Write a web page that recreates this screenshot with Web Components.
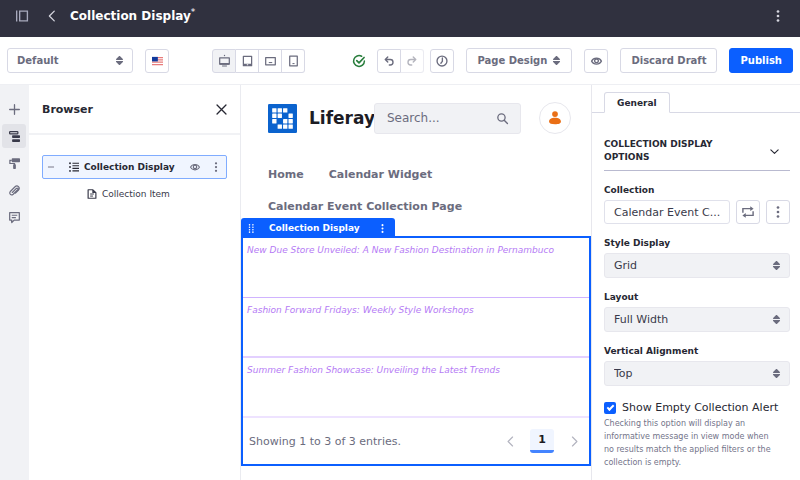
<!DOCTYPE html>
<html lang="en">
<head>
<meta charset="utf-8">
<title>Collection Display</title>
<style>
  html, body { height: 100%; }
  body {
    margin: 0;
    font-family: "DejaVu Sans", sans-serif;
    font-size: 11px;
    color: #272833;
    background: #fff;
    --dark: #30313f;
    --gray: #6b6c7e;
    --soft: #f1f2f5;
    --blue: #0b5fff;
  }
</style>
</head>
<body>
<page-editor></page-editor>

<script>
const RESET = `
  *, *::before, *::after { box-sizing: border-box; }
  button, input, select { font: inherit; color: inherit; margin: 0; }
  button { padding: 0; border: 0; background: none; cursor: pointer; display: inline-flex; align-items: center; justify-content: center; }
  h1, h2, h3, p, ul { margin: 0; padding: 0; }
  ul { list-style: none; }
  a { color: inherit; text-decoration: none; }
`;

class BaseElement extends HTMLElement {
  constructor() {
    super();
    this.attachShadow({ mode: 'open' });
  }
  connectedCallback() {
    if (!this.shadowRoot.firstChild) this.shadowRoot.innerHTML = `<style>${RESET}${this.styles()}</style>${this.markup()}`;
  }
  styles() { return ''; }
  markup() { return ''; }
}

const ICONS = {
  panel: '<path fill="none" stroke="currentColor" stroke-width="1.8" d="M4.900 1.500h10.300v13H4.900z"/><path fill="currentColor" d="M0 .6h1.800v14.800H0z"/>',
  left: '<path fill="none" stroke="currentColor" stroke-width="1.7" stroke-linecap="round" stroke-linejoin="round" d="M11 1.500 4.500 8l6.500 6.500"/>',
  right: '<path fill="none" stroke="currentColor" stroke-width="1.7" stroke-linecap="round" stroke-linejoin="round" d="M5 1.500 11.500 8 5 14.500"/>',
  down: '<path fill="none" stroke="currentColor" stroke-width="2" stroke-linecap="round" stroke-linejoin="round" d="m1.500 5 6.500 6.500L14.500 5"/>',
  dots: '<g fill="currentColor"><circle cx="8" cy="2" r="1.8"/><circle cx="8" cy="8" r="1.8"/><circle cx="8" cy="14" r="1.8"/></g>',
  drag: '<g fill="currentColor"><circle cx="4.500" cy="1.500" r="1.400"/><circle cx="4.500" cy="5.800" r="1.400"/><circle cx="4.500" cy="10.200" r="1.400"/><circle cx="4.500" cy="14.500" r="1.400"/><circle cx="10.500" cy="1.500" r="1.400"/><circle cx="10.500" cy="5.800" r="1.400"/><circle cx="10.500" cy="10.200" r="1.400"/><circle cx="10.500" cy="14.500" r="1.400"/></g>',
  flag: '<path fill="#fff" d="M0 2h16v12H0z"/><path fill="#e87c7c" d="M0 2h16v2H0zm0 3.400h16v1.800H0zm0 3.400h16v1.800H0zm0 3.400h16V14H0z"/><path fill="#123a9c" d="M0 2h8.500v6.600H0z"/>',
  desktop: '<path fill="none" stroke="currentColor" stroke-width="1.800" stroke-linejoin="round" d="M1 3.500h14v9H1z"/><path fill="currentColor" d="M1 11h14v2.400H1zm3.500 3.400h7V16h-7z"/><circle cx="8" cy="0" r="1" fill="currentColor"/>',
  tablet: '<path fill="none" stroke="currentColor" stroke-width="1.800" stroke-linejoin="round" d="M2 1.200h12v13.600H2z"/><path fill="currentColor" d="M2 12h12v3H2z"/><path fill="#fff" d="M7 12.800h2v1.400H7z"/>',
  landscape: '<path fill="none" stroke="currentColor" stroke-width="1.800" stroke-linejoin="round" d="M1 3h14v10.500H1z"/><path fill="currentColor" d="M5.500 9.500h5v1.500h-5z"/>',
  portrait: '<path fill="none" stroke="currentColor" stroke-width="1.800" stroke-linejoin="round" d="M2.500 1h11v14h-11z"/><path fill="currentColor" d="M6.500 11h3v1.500h-3z"/>',
  check: '<path fill="none" stroke="currentColor" stroke-width="2" stroke-linecap="round" d="M11.500 1.700A7.200 7.200 0 1 0 15.200 8"/><path fill="none" stroke="currentColor" stroke-width="2.200" stroke-linecap="round" stroke-linejoin="round" d="m5 7.500 3 3 6.800-7.200"/>',
  undo: '<path fill="none" stroke="currentColor" stroke-width="2.200" stroke-linecap="round" stroke-linejoin="round" d="M3 5.500h7a4.400 4.400 0 0 1 0 8.800H8.500M6 1.500 2 5.500l4 4"/>',
  redo: '<path fill="none" stroke="currentColor" stroke-width="2.200" stroke-linecap="round" stroke-linejoin="round" d="M13 5.500H6a4.400 4.400 0 0 0 0 8.800h1.500M10 1.500l4 4-4 4"/>',
  clock: '<circle cx="8" cy="8" r="6.600" fill="none" stroke="currentColor" stroke-width="1.800"/><path fill="none" stroke="currentColor" stroke-width="1.800" stroke-linecap="round" d="M8.500 4v4.500L6.500 11"/>',
  eye: '<path fill="none" stroke="currentColor" stroke-width="1.700" d="M.8 8.200c3-5.800 11.400-5.800 14.400 0-3 5.800-11.400 5.800-14.400 0z"/><circle cx="8" cy="7.800" r="2.700" fill="none" stroke="currentColor" stroke-width="1.900"/>',
  plus: '<path fill="none" stroke="currentColor" stroke-width="1.900" stroke-linecap="round" d="M8 1v14M1 8h14"/>',
  minus: '<path fill="none" stroke="currentColor" stroke-width="2.400" stroke-linecap="round" d="M1 8h14"/>',
  tree: '<rect x=".9" y=".9" width="12" height="3.400" rx="1" fill="none" stroke="currentColor" stroke-width="1.800"/><rect x="4.500" y="6" width="11.500" height="4" rx="1" fill="currentColor"/><rect x="4.500" y="12" width="11.500" height="4" rx="1" fill="currentColor"/>',
  roller: '<rect x="4" y=".5" width="12" height="5.500" rx="1" fill="currentColor"/><path fill="none" stroke="currentColor" stroke-width="1.800" d="M4 3.300H1.300V8H8v2"/><rect x="6" y="9" width="4" height="7" rx="1" fill="currentColor"/>',
  clip: '<path fill="none" stroke="currentColor" stroke-width="1.700" stroke-linecap="round" stroke-linejoin="round" d="m4.800 10.900 5.900-5.900c1.600-1.400 3.300.3 1.900 1.900l-6.500 6.500c-3 2.600-6.700-.8-4.200-4l6.500-6.500c4-3.800 8.600.9 5.200 4.800l-4.200 4.200"/>',
  comment: '<path fill="none" stroke="currentColor" stroke-width="1.800" stroke-linejoin="round" d="M1 1h14v10.800H7.500L4 15.300v-3.500H1z"/><path stroke="currentColor" stroke-width="1.500" d="M4 4.800h8M4 8.200h6"/>',
  close: '<path fill="none" stroke="currentColor" stroke-width="1.900" stroke-linecap="round" d="m1.500 1.500 13 13m0-13-13 13"/>',
  list: '<path fill="currentColor" d="M5.500 1h10.500v1.900H5.500zm0 4h10.500v1.900H5.500zm0 4.200h10.500v1.900H5.500zm0 4.100h10.500v1.900H5.500z"/><g fill="currentColor"><circle cx="1.600" cy="2" r="1.500"/><circle cx="1.600" cy="8" r="1.500"/><circle cx="1.600" cy="14.200" r="1.500"/></g>',
  doc: '<path fill="none" stroke="currentColor" stroke-width="1.900" stroke-linejoin="round" d="M1.800 1.200H9L14.200 6v8.800H1.800z"/><path stroke="currentColor" stroke-width="1.600" d="M5 8h6M5 11.300h4.500"/><path fill="currentColor" d="M8.500 1v5.500H14z"/>',
  search: '<circle cx="6.500" cy="6.500" r="5.300" fill="none" stroke="currentColor" stroke-width="1.900"/><path stroke="currentColor" stroke-width="2" stroke-linecap="round" d="m10.500 10.500 4.700 4.700"/>',
  user: '<circle cx="8" cy="3.500" r="3.300" fill="currentColor"/><path fill="currentColor" d="M1.200 12.200C1.200 9.500 4 7.800 8 7.800s6.800 1.700 6.800 4.400c0 2-2.800 2.800-6.800 2.800s-6.800-.8-6.800-2.800z"/>',
  swap: '<path fill="none" stroke="currentColor" stroke-width="1.900" d="M1.200 9V3.500H12M14.800 7v5.500H4"/><path fill="currentColor" d="M11 .3 15.500 3.500 11 6.700zM5 9.300.5 12.500 5 15.700z"/>',
  sort: '<path fill="currentColor" d="M8 0c.5 0 .8.200 1.100.5L14 5.500c.6.700.3 1.500-.7 1.500H2.700C1.700 7 1.400 6.200 2 5.500L6.900.5C7.200.2 7.500 0 8 0zm0 16c.5 0 .8-.2 1.100-.5l4.900-5c.6-.7.300-1.500-.7-1.500H2.700C1.700 9 1.400 9.800 2 10.500l4.900 5c.3.300.6.500 1.100.5z"/>',
  logo: '<rect width="16" height="16" rx=".7" fill="#0b63ce"/><g fill="#fff">' +
    [[0, 0], [1, 0], [2, 0], [0, 1], [1, 1], [3, 1], [0, 2], [2, 2], [3, 2], [1, 3], [2, 3], [3, 3]]
      .map(([x, y]) => `<rect x="${2.3 + x * 3}" y="${2.3 + y * 3}" width="2.400" height="2.400" rx=".2"/>`).join('') + '</g>'
};

customElements.define('ui-icon', class extends BaseElement {
  styles() { return `:host { display: inline-flex; flex: none; width: 12px; height: 12px; } svg { width: 100%; height: 100%; display: block; overflow: visible; }`; }
  markup() { return `<svg viewBox="0 0 16 16" aria-hidden="true">${ICONS[this.getAttribute('name')]}</svg>`; }
});

customElements.define('ui-button', class extends BaseElement {
  styles() {
    return `
      :host { display: inline-flex; height: 24px; font-weight: bold; color: var(--gray); }
      :host([text]) { height: 25px; font-size: 10px; }
      button { height: 100%; min-width: 24px; border: 1px solid #d8d9e5; border-radius: 3px; background: #fff; white-space: nowrap; gap: 5px; }
      :host([text]) button { padding: 0 10px; }
      :host([primary]) { color: #fff; }
      :host([primary]) button { background: var(--blue); border-color: var(--blue); }
      :host([active]) button { background: var(--soft); }
      :host([join~="start"]) button { min-width: 23px; border-top-left-radius: 0; border-bottom-left-radius: 0; border-left-width: 0; }
      :host([join~="end"]) button { border-top-right-radius: 0; border-bottom-right-radius: 0; }
      button:disabled { opacity: .5; cursor: default; }
    `;
  }
  markup() {
    const label = this.getAttribute('label');
    return `<button type="button" ${label ? `aria-label="${label}"` : ''} ${this.hasAttribute('disabled') ? 'disabled' : ''}><slot></slot></button>`;
  }
});

customElements.define('ui-select', class extends BaseElement {
  styles() {
    return `
      :host { display: grid; font-size: 11px; color: #393a4a; }
      label { font-size: 9px; line-height: 12px; font-weight: bold; color: #272833; margin-bottom: 4px; }
      .box { display: grid; grid-template-columns: 1fr auto; align-items: center; height: 25px; border: 1px solid #e7e7ed; border-radius: 3px; background: var(--soft); }
      select { grid-area: 1 / 1 / 2 / 3; appearance: none; width: 100%; height: 100%; border: 0; background: none; padding: 0 24px 0 9px; }
      ui-icon { grid-area: 1 / 2; width: 9px; height: 9px; margin-right: 8px; color: var(--gray); pointer-events: none; }
      :host([plain]) { font-size: 10px; font-weight: bold; color: var(--gray); }
      :host([plain]) .box { background: #fff; border-color: #d8d9e5; }
    `;
  }
  markup() {
    const label = this.getAttribute('label');
    const plain = this.hasAttribute('plain');
    return `${plain ? '' : `<label for="s">${label}</label>`}
      <div class="box"><select id="s" ${plain ? `aria-label="${label}"` : ''}><option>${this.getAttribute('value')}</option></select><ui-icon name="sort"></ui-icon></div>`;
  }
});

customElements.define('control-menu', class extends BaseElement {
  styles() {
    return `
      :host { display: flex; box-sizing: border-box; align-items: center; height: 37px; padding: 0 16px 5px; background: var(--dark); color: #d5d6df; }
      h1 { flex: 1; color: #fff; font-size: 12px; line-height: 16px; margin-left: 12px; }
      sup { font-size: 9px; line-height: 8px; font-weight: normal; vertical-align: top; }
      .back { margin-left: 18px; }
      .panel { color: #a7a9bc; }
    `;
  }
  markup() {
    return `<button class="panel" aria-label="Product menu"><ui-icon name="panel"></ui-icon></button>
      <button class="back" aria-label="Back"><ui-icon name="left"></ui-icon></button>
      <h1>Collection Display<sup>*</sup></h1>
      <button class="dots" aria-label="Options"><ui-icon name="dots"></ui-icon></button>`;
  }
});

customElements.define('editor-toolbar', class extends BaseElement {
  styles() {
    return `
      :host { display: flex; box-sizing: border-box; align-items: center; height: 48px; padding: 0 7px; border-bottom: 1px solid #eeeff3; gap: 12px; }
      .exp { width: 126px; }
      .sizes { display: flex; margin: 0 auto 0 31px; }
      .history { display: flex; }
      .ok { color: #287d3c; }
      .history, ui-button { flex: none; }
      .clock { margin-left: -6px; }
      .small { width: 9px; height: 9px; }
      .mid { width: 11px; }
      .arrow { width: 10px; }
    `;
  }
  markup() {
    return `<ui-select class="exp" plain label="Experience" value="Default"></ui-select>
      <ui-button label="Language: English"><ui-icon name="flag" class="mid"></ui-icon></ui-button>
      <div class="sizes">
        <ui-button active join="end" label="Desktop"><ui-icon name="desktop" class="mid"></ui-icon></ui-button>
        <ui-button join="start end" label="Tablet"><ui-icon name="tablet" class="mid"></ui-icon></ui-button>
        <ui-button join="start end" label="Landscape phone"><ui-icon name="landscape" class="mid"></ui-icon></ui-button>
        <ui-button join="start" label="Portrait phone"><ui-icon name="portrait" class="mid"></ui-icon></ui-button>
      </div>
      <ui-icon class="ok" name="check"></ui-icon>
      <div class="history">
        <ui-button join="end" label="Undo"><ui-icon name="undo" class="arrow"></ui-icon></ui-button>
        <ui-button join="start" disabled label="Redo"><ui-icon name="redo" class="arrow"></ui-icon></ui-button>
      </div>
      <ui-button class="clock" label="History"><ui-icon name="clock"></ui-icon></ui-button>
      <ui-button text>Page Design <ui-icon class="small" name="sort"></ui-icon></ui-button>
      <ui-button label="Preview"><ui-icon name="eye" class="mid"></ui-icon></ui-button>
      <ui-button text>Discard Draft</ui-button>
      <ui-button text primary>Publish</ui-button>`;
  }
});

customElements.define('side-rail', class extends BaseElement {
  styles() {
    return `
      :host { display: flex; flex-direction: column; gap: 3px; padding: 12px 2px; background: var(--soft); color: var(--gray); }
      button { height: 24px; width: 24px; border-radius: 3px; }
      button[aria-pressed="true"] { background: #e2e3e8; color: #393a4a; }
      ui-icon { width: 11px; height: 11px; }
    `;
  }
  markup() {
    return [['plus', 'Fragments and widgets'], ['tree', 'Browser'], ['roller', 'Page design options'], ['clip', 'Page content'], ['comment', 'Comments']]
      .map(([i, l]) => `<button aria-label="${l}" aria-pressed="${i === 'tree'}"><ui-icon name="${i}"></ui-icon></button>`).join('');
  }
});

customElements.define('tree-item', class extends BaseElement {
  styles() {
    return `
      :host { display: flex; align-items: center; box-sizing: border-box; font-size: 9px; height: 24px; padding: 0 5px 0 44px; gap: 5px; border: 1px solid transparent; color: #393a4a; }
      :host([selected]) { padding-left: 5px; background: #f0f5ff; border-color: #80acff; border-radius: 2px; font-weight: bold; color: #272833; }
      span { flex: 1; white-space: nowrap; }
      ui-icon { width: 10px; height: 10px; }
      .toggle { width: 6px; margin-right: 10px; }
      .toggle ui-icon { width: 6px; }
      button { color: var(--gray); width: 10px; }
      .eye { margin-right: 6px; }
    `;
  }
  markup() {
    return this.hasAttribute('selected')
      ? `<button aria-label="Collapse" class="toggle"><ui-icon name="minus"></ui-icon></button><ui-icon name="list"></ui-icon><span><slot></slot></span>
         <button class="eye" aria-label="Hide"><ui-icon name="eye"></ui-icon></button><button aria-label="Options"><ui-icon name="dots"></ui-icon></button>`
      : `<ui-icon name="doc"></ui-icon><span><slot></slot></span>`;
  }
});

customElements.define('browser-panel', class extends BaseElement {
  styles() {
    return `
      :host { display: block; border-right: 1px solid #eaebf0; }
      header { display: flex; align-items: center; justify-content: space-between; height: 50px; padding: 0 13px; border-bottom: 2px solid #f1f2f5; }
      h2 { font-size: 11px; }
      header ui-icon { width: 11px; height: 11px; }
      .tree { padding: 20px 13px; display: grid; gap: 3px; }
    `;
  }
  markup() {
    return `<header><h2>Browser</h2><button aria-label="Close"><ui-icon name="close"></ui-icon></button></header>
      <div class="tree"><tree-item selected>Collection Display</tree-item><tree-item>Collection Item</tree-item></div>`;
  }
});

customElements.define('collection-display', class extends BaseElement {
  styles() {
    return `
      :host { display: block; position: relative; border: 2px solid var(--blue); }
      .tab { position: absolute; left: -2px; bottom: 100%; display: flex; align-items: center; gap: 13px; height: 20px; padding: 0 8px 0 6px; border-radius: 3px 3px 0 0; background: var(--blue); color: #fff; font-size: 9px; font-weight: bold; white-space: nowrap; }
      .tab ui-icon { width: 9px; height: 9px; }
      .tab button { margin-left: 5px; }
      li { height: 60px; padding: 5px 4px; border-bottom: 1px solid #d0b3ff; font-size: 9px; line-height: 14px; font-style: italic; color: #b57bf5; }
      li + li { border-bottom: 2px solid #e3d0ff; }
      li:last-child { border-color: #eee3ff; }
      footer { display: flex; align-items: center; justify-content: space-between; height: 46px; padding: 0 5px 0 6px; color: var(--gray); }
      nav { display: flex; align-items: center; gap: 10px; color: #b2b3bf; }
      nav .page { width: 24px; height: 24px; background: #f0f5ff; border-bottom: 3px solid #4484ff; border-radius: 3px; color: #1c1c24; font-weight: bold; }
      nav ui-icon { width: 11px; height: 11px; }
      nav button { min-width: 20px; }
    `;
  }
  markup() {
    return `<div class="tab"><ui-icon name="drag"></ui-icon>Collection Display<button aria-label="Options"><ui-icon name="dots"></ui-icon></button></div>
      <ul>
        <li>New Due Store Unveiled: A New Fashion Destination in Pernambuco</li>
        <li>Fashion Forward Fridays: Weekly Style Workshops</li>
        <li>Summer Fashion Showcase: Unveiling the Latest Trends</li>
      </ul>
      <footer><span>Showing 1 to 3 of 3 entries.</span>
        <nav aria-label="Pages"><button aria-label="Previous"><ui-icon name="left"></ui-icon></button><button class="page">1</button><button aria-label="Next"><ui-icon name="right"></ui-icon></button></nav>
      </footer>`;
  }
});

customElements.define('page-canvas', class extends BaseElement {
  styles() {
    return `
      :host { display: block; min-width: 0; border-right: 1px solid #e7e7ed; }
      header { display: flex; align-items: center; padding: 17px 20px 0 27px; color: #1c1c24; }
      .logo { width: 29px; height: 29px; margin-right: 12px; }
      strong { font-size: 17px; margin-right: -1px; }
      .search { flex: 1; min-width: 0; display: flex; align-items: center; height: 31px; border: 1px solid #e7e7ed; border-radius: 3px; background: var(--soft); color: var(--gray); padding: 0 12px; }
      input { flex: 1; min-width: 0; border: 0; padding: 0; background: none; font-size: 12px; outline: 0; }
      input::placeholder { color: var(--gray); opacity: 1; }
      .search ui-icon { width: 11px; height: 11px; }
      .user { width: 32px; height: 32px; margin-left: 18px; border: 1px solid #e7e7ed; border-radius: 50%; color: #ea6f16; }
      .user ui-icon { width: 14px; height: 14px; }
      nav { display: flex; flex-wrap: wrap; column-gap: 25px; padding: 25px 60px 13px 27px; font-size: 11px; line-height: 32px; font-weight: bold; color: var(--gray); }
    `;
  }
  markup() {
    return `<header><ui-icon class="logo" name="logo"></ui-icon><strong>Liferay</strong>
        <div class="search"><input type="text" aria-label="Search" placeholder="Search..."><button aria-label="Submit search"><ui-icon name="search"></ui-icon></button></div>
        <button class="user" aria-label="User"><ui-icon name="user"></ui-icon></button></header>
      <nav><a href="#home">Home</a><a href="#widget">Calendar Widget</a><a href="#event">Calendar Event Collection Page</a></nav>
      <collection-display></collection-display>`;
  }
});

customElements.define('config-panel', class extends BaseElement {
  styles() {
    return `
      :host { display: block; min-width: 0; }
      .tabs { display: flex; padding: 7px 12px 0; border-bottom: 1px solid #d8d9e5; }
      .tabs button { height: 21px; padding: 0 12px; margin-bottom: -1px; border: 1px solid #d8d9e5; border-bottom-color: #fff; border-radius: 3px 3px 0 0; background: #fff; font-size: 9px; font-weight: bold; }
      .body { padding: 25px 10px 12px 12px; display: grid; grid-template-columns: minmax(0, 1fr); gap: 13px; }
      .section { width: 100%; justify-content: space-between; padding-bottom: 6px; border-bottom: 1px solid #b9bad0; font-size: 9px; line-height: 13px; font-weight: bold; text-align: left; text-transform: uppercase; }
      .section span { max-width: 124px; }
      .section ui-icon { width: 9px; height: 9px; margin-right: 11px; }
      .label { display: block; font-size: 9px; line-height: 12px; font-weight: bold; margin-bottom: 4px; }
      .row { display: flex; gap: 6px; }
      .row input { flex: 1; min-width: 0; height: 24px; padding: 0 4px 0 9px; border: 1px solid #e0e1eb; border-radius: 3px; color: #393a4a; text-overflow: ellipsis; }
      .tick { display: flex; align-items: center; gap: 6px; line-height: 14px; margin-top: 2px; color: #272833; white-space: nowrap; }
      .tick input { appearance: none; width: 12px; height: 12px; border-radius: 2px; background: var(--blue); display: grid; place-items: center; }
      .tick input::before { content: ""; width: 7px; height: 4px; border: solid #fff; border-width: 0 0 2px 2px; transform: rotate(-45deg); margin-bottom: 2px; }
      .help { margin-top: 2px; padding-right: 12px; font-size: 8px; line-height: 13px; color: #73748a; }
    `;
  }
  markup() {
    return `<div class="tabs" role="tablist"><button role="tab" aria-selected="true">General</button></div>
      <div class="body">
        <button class="section" aria-expanded="true"><span>Collection Display Options</span><ui-icon name="down"></ui-icon></button>
        <div><label class="label" for="c">Collection</label>
          <div class="row"><input id="c" type="text" readonly value="Calendar Event C..."><ui-button label="Change collection"><ui-icon name="swap"></ui-icon></ui-button><ui-button label="Collection options"><ui-icon name="dots"></ui-icon></ui-button></div></div>
        <ui-select label="Style Display" value="Grid"></ui-select>
        <ui-select label="Layout" value="Full Width"></ui-select>
        <ui-select label="Vertical Alignment" value="Top"></ui-select>
        <div><label class="tick"><input type="checkbox" checked aria-describedby="h">Show Empty Collection Alert</label>
          <p class="help" id="h">Checking this option will display an informative message in view mode when no results match the applied filters or the collection is empty.</p></div>
      </div>`;
  }
});

customElements.define('page-editor', class extends BaseElement {
  styles() {
    return `
      :host { display: grid; grid-template-columns: minmax(0, 1fr); grid-template-rows: auto auto 1fr; min-height: 100%; }
      main { display: grid; grid-template-columns: 29px 212px minmax(0, 1fr) 208px; }
    `;
  }
  markup() {
    return `<control-menu></control-menu><editor-toolbar></editor-toolbar>
      <main><side-rail></side-rail><browser-panel></browser-panel><page-canvas></page-canvas><config-panel></config-panel></main>`;
  }
});
</script>
</body>
</html>
